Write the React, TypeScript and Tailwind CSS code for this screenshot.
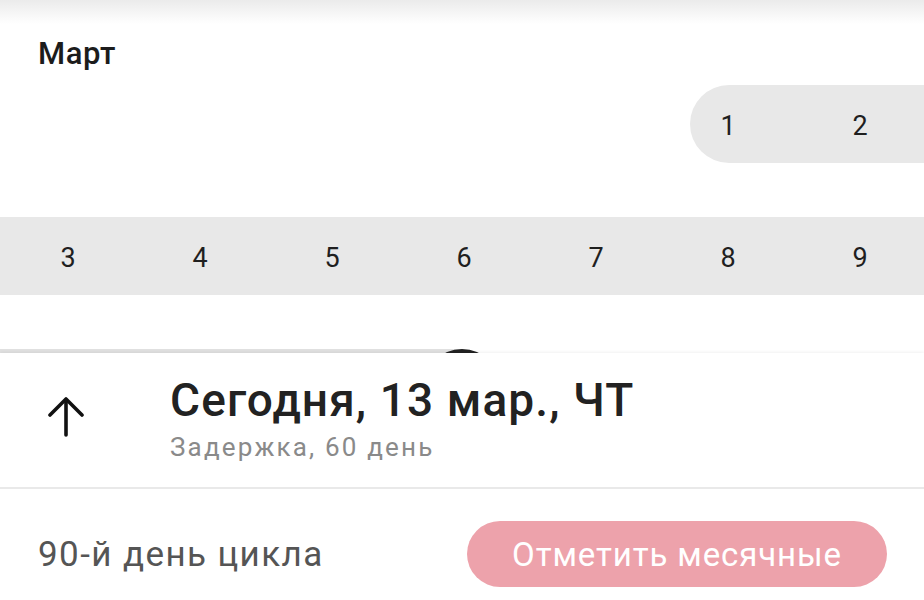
import React from 'react';

// Calendar month view with "today" bottom sheet
const rows: { days: (number | null)[]; band: 'start' | 'full' | 'toToday'; today?: number; hidden?: boolean }[] = [
  { days: [null, null, null, null, null, 1, 2], band: 'start' },
  { days: [3, 4, 5, 6, 7, 8, 9], band: 'full' },
  // this week sits under the sheet, only the top of the "today" circle shows
  { days: [10, 11, 12, 13, 14, 15, 16], band: 'toToday', today: 13, hidden: true },
];

function ArrowUp() {
  return (
    <svg width="36" height="40" viewBox="0 0 36 40" fill="none" stroke="#111" strokeWidth="3.6" strokeLinecap="round" strokeLinejoin="round">
      <polyline points="2,18 18,2 34,18" />
      <line x1="18" y1="3" x2="18" y2="38" />
    </svg>
  );
}

export default function App() {
  return (
    <div className="relative w-[924px] h-[600px] overflow-hidden bg-white text-[#1f1f1f]" style={{ fontFamily: 'Roboto, "Noto Sans", sans-serif' }}>
      {/* app bar shadow */}
      <div className="h-[24px] bg-gradient-to-b from-[#ebebeb] to-white"></div>

      <div className="pl-[38px] pt-[10px] text-[31px] font-medium leading-[40px] tracking-[0.02em] text-[#1c1c1c]">Март</div>

      <div className="mt-[11px] flex flex-col gap-[54px]">
        {rows.map((row, i) => (
          <div key={i} className="relative grid grid-cols-7 h-[78px]">
            {row.band === 'start' && (
              <div className="absolute top-0 bottom-0 left-[690px] right-0 rounded-l-full bg-[#e8e8e8]"></div>
            )}
            {row.band === 'full' && <div className="absolute inset-0 bg-[#e8e8e8]"></div>}
            {row.band === 'toToday' && <div className="absolute top-0 bottom-0 left-0 w-[462px] bg-[#e0e0e0]"></div>}
            {row.days.map((d, j) => (
              <div key={j} className="relative flex items-center justify-center text-[27px] leading-none">
                {d !== null && d === row.today ? (
                  <div className="w-[78px] h-[78px] rounded-full bg-[#222]"></div>
                ) : row.hidden ? null : (
                  <span className="pt-[5px] pl-[4px]">{d}</span>
                )}
              </div>
            ))}
          </div>
        ))}
      </div>

      {/* bottom sheet */}
      <div className="absolute left-0 right-0 top-[353px] bottom-0 bg-white shadow-[0_-1px_3px_rgba(0,0,0,0.06)]">
        <div className="flex items-center h-[136px] border-b-2 border-[#e9e9e9]">
          <div className="w-[170px] pl-[48px] mb-[6px]">
            <ArrowUp />
          </div>
          <div className="flex flex-col pb-[4px]">
            <div className="text-[46px] font-medium leading-[52px] tracking-[0.024em] text-[#222]">Сегодня, 13 мар., ЧТ</div>
            <div className="mt-[5px] text-[26px] leading-[32px] tracking-[0.084em] text-[#8a8a8a]">Задержка, 60 день</div>
          </div>
        </div>
        <div className="flex items-center justify-between pl-[38px] pr-[37px] pt-[32px]">
          <span className="text-[35px] leading-none tracking-[0.04em] text-[#555]">90-й день цикла</span>
          <button className="w-[420px] h-[66px] rounded-full bg-[#eda2ab] text-white text-[33px] leading-none tracking-[0.027em]">
            Отметить месячные
          </button>
        </div>
      </div>
    </div>
  );
}
